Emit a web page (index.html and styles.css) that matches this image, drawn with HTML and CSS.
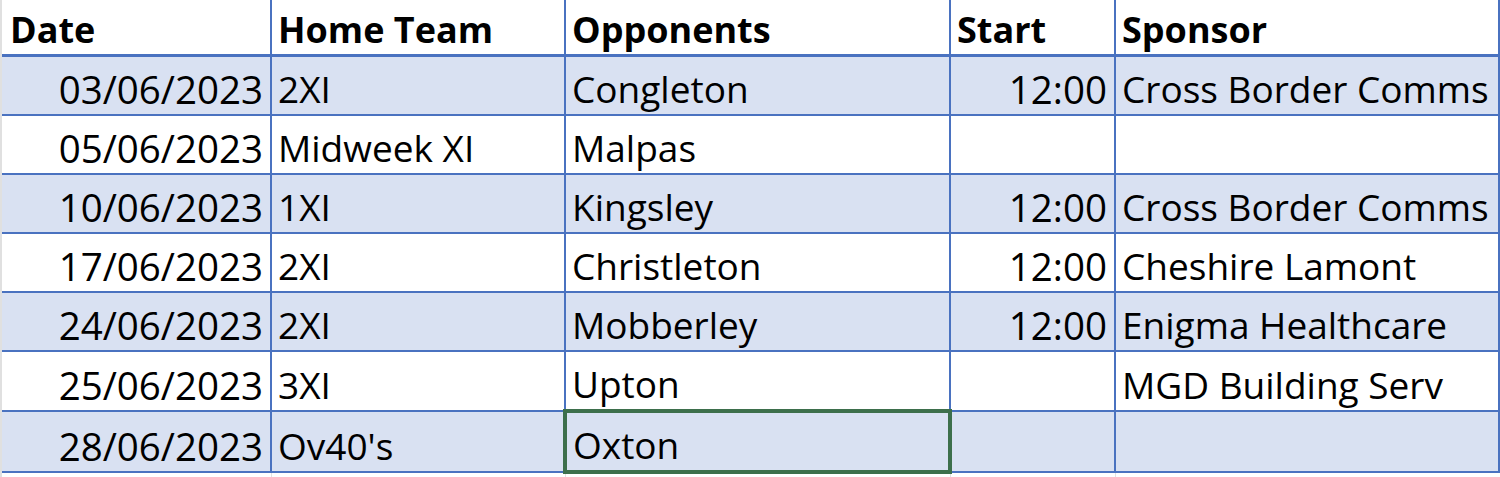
FILE: index.html
```html
<!DOCTYPE html>
<html lang="en">
<head>
<meta charset="utf-8">
<title>Fixtures</title>
<link rel="stylesheet" href="styles.css">
</head>
<body>
<div class="sheet">
  <table class="fixtures">
    <colgroup>
      <col class="c-date"><col class="c-home"><col class="c-opp"><col class="c-start"><col class="c-spon">
    </colgroup>
    <thead>
      <tr><th>Date</th><th>Home Team</th><th>Opponents</th><th>Start</th><th>Sponsor</th></tr>
    </thead>
    <tbody>
      <tr class="band"><td class="num">03/06/2023</td><td>2XI</td><td>Congleton</td><td class="num">12:00</td><td>Cross Border Comms</td></tr>
      <tr><td class="num">05/06/2023</td><td>Midweek XI</td><td>Malpas</td><td class="num"></td><td></td></tr>
      <tr class="band"><td class="num">10/06/2023</td><td>1XI</td><td>Kingsley</td><td class="num">12:00</td><td>Cross Border Comms</td></tr>
      <tr><td class="num">17/06/2023</td><td>2XI</td><td>Christleton</td><td class="num">12:00</td><td>Cheshire Lamont</td></tr>
      <tr class="band"><td class="num">24/06/2023</td><td>2XI</td><td>Mobberley</td><td class="num">12:00</td><td>Enigma Healthcare</td></tr>
      <tr><td class="num">25/06/2023</td><td>3XI</td><td>Upton</td><td class="num"></td><td>MGD Building Serv</td></tr>
      <tr class="band"><td class="num">28/06/2023</td><td>Ov40's</td><td class="selected">Oxton</td><td class="num"></td><td></td></tr>
      <tr class="grid"><td></td><td></td><td></td><td></td><td></td></tr>
    </tbody>
  </table>
</div>
</body>
</html>
```

FILE: styles.css
```css
html, body {
  margin: 0;
  padding: 0;
  background: #ffffff;
}

.sheet {
  width: 1500px;
  height: 477px;
  overflow: hidden;
  box-sizing: border-box;
  border-left: 2px solid #e0e0e0;
}

.fixtures {
  border-collapse: collapse;
  table-layout: fixed;
  width: 1497px;
  font-family: "Open Sans", "Noto Sans", sans-serif;
  font-size: 37px;
  color: #000;
}

.c-date { width: 269px; }
.c-home { width: 294px; }
.c-opp { width: 385px; }
.c-start { width: 165px; }
.c-spon { width: 384px; }

.fixtures th,
.fixtures td {
  border: 2px solid #4a72c0;
  padding: 0 7px 0 6px;
  vertical-align: bottom;
  text-align: left;
  white-space: nowrap;
  overflow: visible;
}

.fixtures th:first-child,
.fixtures td:first-child {
  border-left: none;
}

.fixtures th {
  font-size: 36px;
  font-weight: 700;
  height: 54px;
  background: #fff;
  border-top: none;
  border-bottom: 3px solid #4a72c0;
  line-height: 48px;
  padding-left: 6px;
}

.fixtures th:first-child {
  padding-left: 8px;
}

.fixtures td {
  height: 57px;
  line-height: 50px;
}

.fixtures tr.band td {
  background: #d9e1f2;
}

.fixtures td.num {
  text-align: right;
  font-size: 38.5px;
}

.fixtures td.selected {
  border: 4px solid #3d6f4c;
}

.fixtures tr.grid td {
  height: 20px;
  border: none;
  border-left: 1px solid #e2e2e2;
  background: #fff;
}

.fixtures tr.grid td:first-child {
  border-left: none;
}
```
